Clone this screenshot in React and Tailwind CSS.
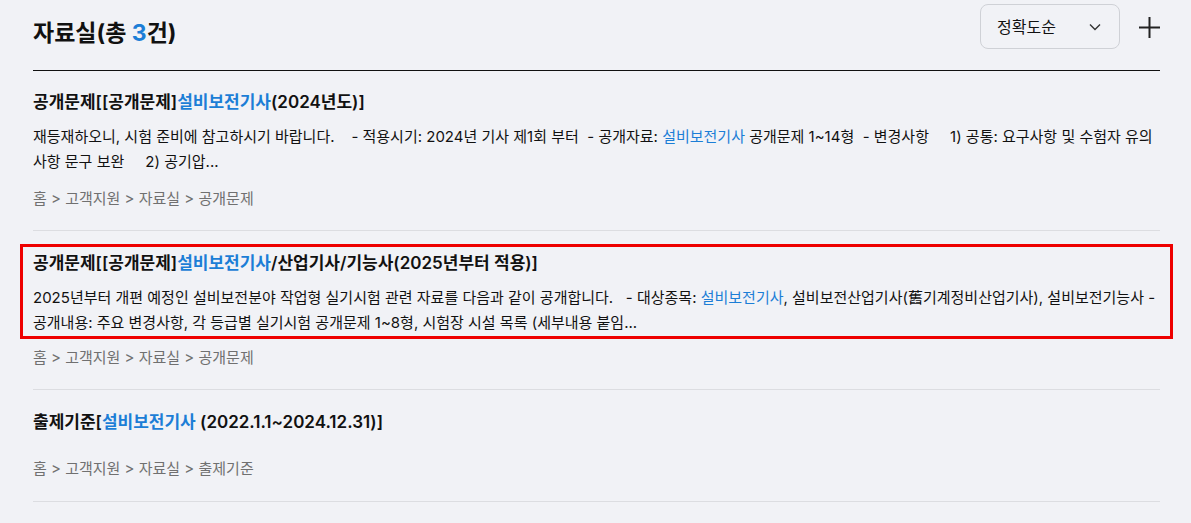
import React from 'react';

const BLUE = 'text-[#1c7ed6]';

const Breadcrumb = ({ last }) => (
  <p className="text-[15px] leading-[20px] text-[#707070]">
    홈 &gt; 고객지원 &gt; 자료실 &gt; {last}
  </p>
);

const Desc = ({ children }) => (
  <p className="mt-[10px] text-[15px] leading-[25px] text-[#111] whitespace-pre-wrap">{children}</p>
);

const Title = ({ children }) => (
  <h3 className="text-[17px] leading-[24px] font-semibold text-[#111]">{children}</h3>
);

function App() {
  return (
    <div
      className="min-h-[523px] bg-[#f1f2f6] px-[33px] pr-[31px]"
      style={{ fontFamily: 'Inter, "Noto Sans CJK KR", sans-serif' }}
    >
      {/* header */}
      <div className="flex items-start justify-between h-[71px] border-b border-[#111]">
        <h2 className="mt-[17px] text-[23px] leading-[32px] font-bold text-[#111]">
          자료실(총 <span className={BLUE}>3</span>건)
        </h2>
        <div className="flex items-start gap-[19px]">
          <button className="mt-[4px] flex h-[45px] w-[140px] items-center justify-between rounded-lg border border-[#cfd1d6] pl-[16px] pr-[18px] text-[16px] text-[#111]">
            <span>정확도순</span>
            <svg width="12" height="8" viewBox="0 0 12 8" fill="none" stroke="#333" strokeWidth="1.4">
              <path d="M1 1.5l5 5 5-5" />
            </svg>
          </button>
          <svg className="mt-[17px]" width="21" height="21" viewBox="0 0 21 21" stroke="#222" strokeWidth="2">
            <path d="M10.5 0v21M0 10.5h21" />
          </svg>
        </div>
      </div>

      {/* item 1 */}
      <div className="pt-[19px] pb-[21px] border-b border-[#dcdde1]">
        <Title>
          공개문제[[공개문제]<span className={BLUE}>설비보전기사</span>(2024년도)]
        </Title>
        <Desc>
          재등재하오니, 시험 준비에 참고하시기 바랍니다.    - 적용시기: 2024년 기사 제1회 부터  - 공개자료: <span className={BLUE}>설비보전기사</span> 공개문제 1~14형  - 변경사항     1) 공통: 요구사항 및 수험자 유의사항 문구 보완     2) 공기압...
        </Desc>
        <div className="mt-[15px]">
          <Breadcrumb last="공개문제" />
        </div>
      </div>

      {/* item 2 (highlighted) */}
      <div className="pt-[13px] pb-[21px] border-b border-[#dcdde1]">
        <div className="-mx-[13px] border-[3px] border-[#ee0000] px-[10px] pt-[4px] pb-[1px]">
          <Title>
            공개문제[[공개문제]<span className={BLUE}>설비보전기사</span>/산업기사/기능사(2025년부터 적용)]
          </Title>
          <Desc>
            2025년부터 개편 예정인 설비보전분야 작업형 실기시험 관련 자료를 다음과 같이 공개합니다.   - 대상종목: <span className={BLUE}>설비보전기사</span>, 설비보전산업기사(舊기계정비산업기사), 설비보전기능사 - 공개내용: 주요 변경사항, 각 등급별 실기시험 공개문제 1~8형, 시험장 시설 목록 (세부내용 붙임...
          </Desc>
        </div>
        <div className="mt-[9px]">
          <Breadcrumb last="공개문제" />
        </div>
      </div>

      {/* item 3 */}
      <div className="pt-[20px] pb-[22px] border-b border-[#dcdde1]">
        <Title>
          출제기준[<span className={BLUE}>설비보전기사</span> (2022.1.1~2024.12.31)]
        </Title>
        <div className="mt-[25px]">
          <Breadcrumb last="출제기준" />
        </div>
      </div>
    </div>
  );
}

export default App;
